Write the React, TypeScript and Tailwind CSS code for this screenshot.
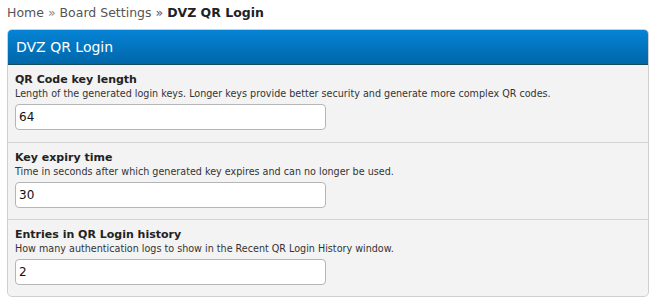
import React from 'react';

const settings = [
  {
    label: 'QR Code key length',
    desc: 'Length of the generated login keys. Longer keys provide better security and generate more complex QR codes.',
    value: '64',
  },
  {
    label: 'Key expiry time',
    desc: 'Time in seconds after which generated key expires and can no longer be used.',
    value: '30',
  },
  {
    label: 'Entries in QR Login history',
    desc: 'How many authentication logs to show in the Recent QR Login History window.',
    value: '2',
  },
];

function App() {
  return (
    <div className="w-[651px] h-[304px] bg-white font-['DejaVu_Sans',Verdana,sans-serif] px-[7px] pt-[5px]">
      <div className="text-[12.5px] leading-[15px] text-[#555]">
        Home <span className="text-[#888]">»</span> Board Settings <span className="text-[#555]">»</span>{' '}
        <span className="font-bold text-[#222]">DVZ QR Login</span>
      </div>

      <div className="mt-[9px] w-[642px] border border-[#cfcfcf] rounded-[5px] bg-[#f3f3f3] overflow-hidden">
        <div className="h-[35px] bg-gradient-to-b from-[#0683d6] to-[#0067a9] border-b border-[#184a5c] px-[8px] flex items-center">
          <span className="text-white text-[14px]">DVZ QR Login</span>
        </div>
        {settings.map((s, i) => (
          <div
            key={s.label}
            className={'px-[7px] pt-[7px] h-[77px] ' + (i > 0 ? 'border-t border-[#d4d4d4]' : '')}
          >
            <div className="text-[11px] font-bold text-[#222] leading-[15px]">{s.label}</div>
            <div className="text-[9.6px] text-[#333] leading-[13px]">{s.desc}</div>
            <input
              readOnly
              value={s.value}
              className="mt-[4px] w-[311px] h-[26px] border border-[#b5b5b5] rounded-[4px] bg-white px-[3px] text-[12px] text-[#111] outline-none"
            />
          </div>
        ))}
      </div>
    </div>
  );
}

export default App;
